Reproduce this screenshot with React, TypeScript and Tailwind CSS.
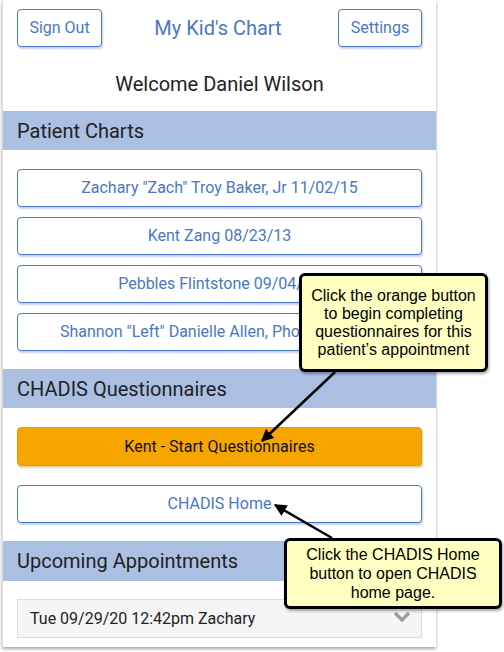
import { ReactNode } from "react";

const patients = [
  'Zachary "Zach" Troy Baker, Jr 11/02/15',
  "Kent Zang 08/23/13",
  "Pebbles Flintstone 09/04/17",
  'Shannon "Left" Danielle Allen, Phoebe 3/2/14',
];

function OutlineButton({ children, className = "" }: { children: ReactNode; className?: string }) {
  return (
    <button
      className={`flex items-center justify-center bg-white border border-[#4a78c2] rounded-[4px] text-[#4a78c2] text-[16px] shadow-[1px_2px_2px_rgba(74,120,194,0.35)] whitespace-nowrap overflow-hidden ${className}`}
    >
      {children}
    </button>
  );
}

function SectionBar({ title, h }: { title: string; h: string }) {
  return (
    <div className={`bg-[#aabfe2] ${h} flex items-center pl-[14px] text-[20px] text-[#222]`}>{title}</div>
  );
}

function Callout({ children, className }: { children: ReactNode; className: string }) {
  return (
    <div
      className={`absolute bg-[#ffffc2] border-[3px] border-black rounded-[6px] shadow-[1px_2px_3px_rgba(0,0,0,0.35)] flex items-center justify-center text-center text-[16px] text-black ${className}`}
      style={{ fontFamily: '"Liberation Sans", Arial, sans-serif' }}
    >
      {children}
    </div>
  );
}

export default function App() {
  return (
    <div className="relative w-[504px] h-[652px] bg-white overflow-hidden" style={{ fontFamily: "Roboto, 'Noto Sans', sans-serif" }}>
      <div className="ml-[2px] w-[434px] border-l border-[#dedede] bg-white shadow-[0_2px_3px_rgba(0,0,0,0.35)]">
        <div className="flex items-center justify-between px-[14px] pt-[9px]">
          <OutlineButton className="w-[85px] h-[38px]">Sign Out</OutlineButton>
          <div className="text-[20px] text-[#4a78c2] pr-[4px]">My Kid's Chart</div>
          <OutlineButton className="w-[84px] h-[38px]">Settings</OutlineButton>
        </div>
        <div className="pt-[25px] pb-[15px] leading-[24px] text-center text-[20px] text-[#222]">Welcome Daniel Wilson</div>

        <SectionBar title="Patient Charts" h="h-[39px]" />
        <div className="px-[14px] pt-[19px] pb-[18px] flex flex-col gap-[10px]">
          {patients.map((p) => (
            <OutlineButton key={p} className="w-full h-[38px]">
              {p}
            </OutlineButton>
          ))}
        </div>

        <SectionBar title="CHADIS Questionnaires" h="h-[39px]" />
        <div className="px-[14px] pt-[19px] pb-[18px] flex flex-col gap-[19px]">
          <button className="w-full h-[39px] bg-[#f7a600] border border-[#dc9a10] rounded-[4px] text-[16px] text-[#111] shadow-[1px_2px_2px_rgba(180,120,0,0.35)]">
            Kent - Start Questionnaires
          </button>
          <OutlineButton className="w-full h-[38px]">CHADIS Home</OutlineButton>
        </div>

        <SectionBar title="Upcoming Appointments" h="h-[40px]" />
        <div className="px-[14px] pt-[18px] pb-[9px]">
          <div className="h-[39px] bg-[#f5f5f5] border border-[#dcdcdc] flex items-center justify-between pl-[12px] pr-[10px] text-[16px] text-[#222]">
            <span>Tue 09/29/20 12:42pm Zachary</span>
            <svg width="18" height="12" viewBox="0 0 18 12" className="-mt-[4px]">
              <polyline points="2,2 9,9 16,2" fill="none" stroke="#9a9a9a" strokeWidth="3.2" />
            </svg>
          </div>
        </div>
      </div>

      <Callout className="left-[299px] top-[273px] w-[189px] h-[99px] leading-[18px]">
        <div>
          Click the orange button
          <br />
          to begin completing
          <br />
          questionnaires for this
          <br />
          patient’s appointment
        </div>
      </Callout>

      <Callout className="left-[284px] top-[538px] w-[218px] h-[71px] leading-[19px]">
        <div>
          Click the CHADIS Home
          <br />
          button to open CHADIS
          <br />
          home page.
        </div>
      </Callout>

      <svg className="absolute left-0 top-0 pointer-events-none" width="504" height="652" viewBox="0 0 504 652">
        <defs>
          <marker id="ah" viewBox="0 0 10 10" refX="9" refY="5" markerWidth="5" markerHeight="5" orient="auto">
            <path d="M0,0 L10,5 L0,10 Z" fill="#000" />
          </marker>
        </defs>
        <line x1="335" y1="372" x2="262" y2="441" stroke="#000" strokeWidth="2.5" markerEnd="url(#ah)" />
        <line x1="332" y1="538" x2="275" y2="505" stroke="#000" strokeWidth="2.5" markerEnd="url(#ah)" />
      </svg>
    </div>
  );
}
